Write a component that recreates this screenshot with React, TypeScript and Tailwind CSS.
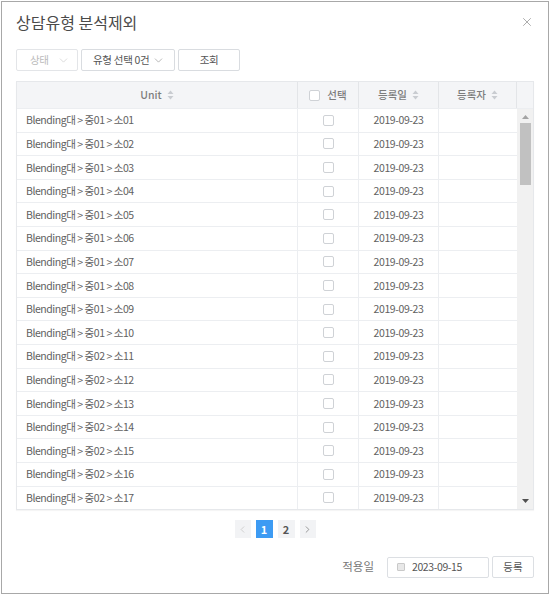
import { ChevronDown, ChevronLeft, ChevronRight, X } from 'lucide-react';

const FONT = "font-['Noto_Sans_CJK_KR','Noto_Sans',sans-serif]";

const rows = Array.from({ length: 17 }, (_, i) => {
  const mid = i < 10 ? '01' : '02';
  const sub = String(i + 1).padStart(2, '0');
  return { id: i, unit: `Blending대 > 중${mid} > 소${sub}`, date: '2019-09-23' };
});

function SortIcon() {
  return (
    <svg width="7" height="10" viewBox="0 0 7 10" className="ml-[5px] inline-block">
      <path d="M3.5 0.5 L6.5 4 L0.5 4 Z" fill="#c9ccd1" />
      <path d="M3.5 9.5 L6.5 6 L0.5 6 Z" fill="#c9ccd1" />
    </svg>
  );
}

function Check() {
  return <span className="inline-block h-[11px] w-[11px] rounded-[2px] border border-[#cfd2d6] bg-white" />;
}

export default function App() {
  return (
    <div className={`h-[595px] w-[550px] bg-white p-px ${FONT}`}>
      <div className="flex h-full flex-col border border-[#a8a8a8] px-[14px]">
        <div className="flex items-center justify-between pt-[10px]">
          <h1 className="text-[16px] leading-[20px] font-normal text-[#4a4a4a]">상담유형 분석제외</h1>
          <X size={14} strokeWidth={1.2} className="text-[#8a8a8a]" />
        </div>

        <div className="mt-[17px] flex h-[22px] gap-[3px] text-[10.5px] tracking-[-0.3px] whitespace-nowrap">
          <div className="flex w-[62px] items-center justify-between rounded-[2px] border border-[#e3e5e8] pl-[13px] pr-[7px] text-[#bbb]">
            <span>상태</span>
            <ChevronDown size={13} strokeWidth={1.1} className="text-[#c4c4c4]" />
          </div>
          <div className="flex w-[94px] items-center justify-between rounded-[2px] border border-[#d9dce0] pl-[11px] pr-[9px] text-[#555]">
            <span>유형 선택 0건</span>
            <ChevronDown size={13} strokeWidth={1.1} className="text-[#888]" />
          </div>
          <div className="flex w-[62px] items-center justify-center rounded-[2px] border border-[#d9dce0] text-[#555]">
            조회
          </div>
        </div>

        <div className="mt-[10px] w-[518px] border border-[#e6e8eb] text-[10.5px] shadow-[0_1px_1px_rgba(0,0,0,0.04)]">
          <div className="flex h-[26px] bg-[#f4f5f7] font-medium text-[#7d7d7d]">
            <div className="flex w-[281px] items-center justify-center border-r border-[#e3e5e8]">
              Unit <SortIcon />
            </div>
            <div className="flex w-[61px] items-center justify-center gap-[7px] border-r border-[#e3e5e8]">
              <Check /> <span>선택</span>
            </div>
            <div className="flex w-[80px] items-center justify-center border-r border-[#e3e5e8]">
              등록일 <SortIcon />
            </div>
            <div className="flex w-[78px] items-center justify-center border-r border-[#e3e5e8]">
              등록자 <SortIcon />
            </div>
            <div className="w-[16px]" />
          </div>

          <div className="flex">
            <div className="w-[500px]">
              {rows.map((r) => (
                <div key={r.id} className="flex h-[23.6px] border-t border-[#eceef1] text-[#616161]">
                  <div className="flex w-[281px] items-center border-r border-[#eceef1] pl-[9px] tracking-[-0.45px]">{r.unit}</div>
                  <div className="flex w-[61px] items-center justify-center border-r border-[#eceef1]">
                    <Check />
                  </div>
                  <div className="flex w-[80px] items-center justify-center border-r border-[#eceef1] tracking-[-0.4px]">{r.date}</div>
                  <div className="w-[78px]" />
                </div>
              ))}
            </div>
            <div className="flex w-[16px] flex-col items-center border-t border-[#eceef1] bg-[#f1f1f1] py-[6px]">
              <svg width="7" height="4" viewBox="0 0 7 4">
                <path d="M3.5 0 L7 4 L0 4 Z" fill="#a3a3a3" />
              </svg>
              <div className="mt-[4px] h-[62px] w-[11px] bg-[#c1c1c1]" />
              <div className="flex-1" />
              <svg width="7" height="4" viewBox="0 0 7 4">
                <path d="M0 0 L7 0 L3.5 4 Z" fill="#505050" />
              </svg>
            </div>
          </div>
        </div>

        <div className="mt-[10px] flex justify-center gap-[5px] text-[11px] font-semibold">
          <div className="flex h-[18px] w-[16px] items-center justify-center bg-[#f2f3f5] text-[#c4c4c4]">
            <ChevronLeft size={11} strokeWidth={1.6} />
          </div>
          <div className="flex h-[18px] w-[17px] items-center justify-center bg-[#3d9bf3] text-white">1</div>
          <div className="flex h-[18px] w-[17px] items-center justify-center bg-[#f2f3f5] text-[#555]">2</div>
          <div className="flex h-[18px] w-[16px] items-center justify-center bg-[#f2f3f5] text-[#777]">
            <ChevronRight size={11} strokeWidth={1.6} />
          </div>
        </div>

        <div className="mt-[18px] flex items-center justify-end text-[10.5px]">
          <span className="mr-[13px] text-[11.5px] text-[#777]">적용일</span>
          <div className="flex h-[21px] w-[102px] items-center rounded-[2px] border border-[#dcdfe3] pl-[9px] tracking-[-0.4px] text-[#555]">
            <span className="mr-[7px] inline-block h-[8px] w-[8px] rounded-[1px] border border-[#c9c9c9] bg-[#e8e8e8]" />
            2023-09-15
          </div>
          <div className="ml-[3px] flex h-[22px] w-[42px] items-center justify-center rounded-[2px] border border-[#dcdfe3] text-[#555]">
            등록
          </div>
        </div>
      </div>
    </div>
  );
}
